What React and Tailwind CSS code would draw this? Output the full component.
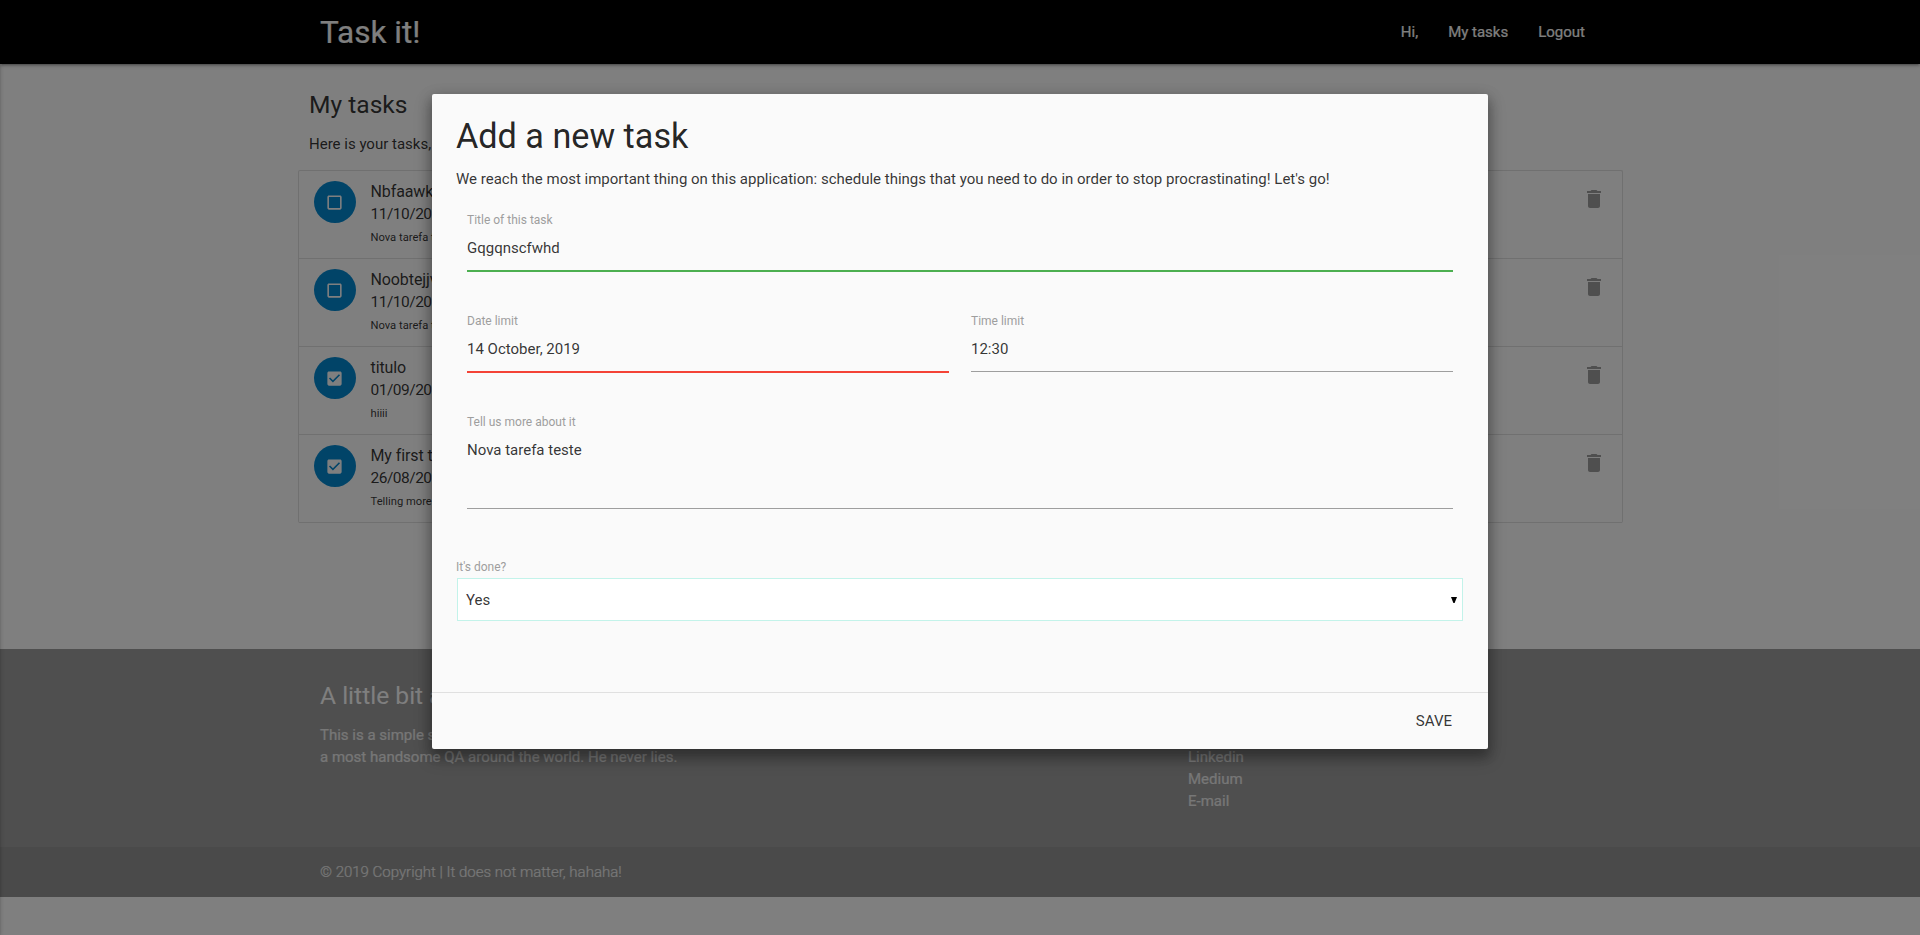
const tasks = [
  { title: "Nbfaawkdj", date: "11/10/2019", note: "Nova tarefa teste", done: false },
  { title: "Noobtejjvq", date: "11/10/2019", note: "Nova tarefa teste", done: false },
  { title: "titulo", date: "01/09/2019", note: "hiiii", done: true },
  { title: "My first task", date: "26/08/2019", note: "Telling more about it", done: true },
];

function CheckIcon({ done }) {
  return (
    <svg viewBox="0 0 24 24" className="mr-px size-[19px] fill-white">
      {done ? (
        <path d="M19 3H5c-1.11 0-2 .9-2 2v14c0 1.1.89 2 2 2h14c1.11 0 2-.9 2-2V5c0-1.1-.89-2-2-2zm-9 14l-5-5 1.41-1.41L10 14.17l7.59-7.59L19 8l-9 9z" />
      ) : (
        <path d="M19 5v14H5V5h14m0-2H5c-1.1 0-2 .9-2 2v14c0 1.1.9 2 2 2h14c1.1 0 2-.9 2-2V5c0-1.1-.9-2-2-2z" />
      )}
    </svg>
  );
}

function TaskRow({ task }) {
  return (
    <li className="flex h-[88px] items-start border-b border-[#e0e0e0] pt-[10px] pl-[15px] pr-4 leading-[22px]">
      <span className="flex size-[42px] shrink-0 items-center justify-center rounded-full bg-[#0288d1]">
        <CheckIcon done={task.done} />
      </span>
      <div className="ml-[14.5px] flex-1">
        <p className="text-[16px] tracking-[-0.1px]">{task.title}</p>
        <p className="text-[15.5px] tracking-[-0.5px]">{task.date}</p>
        <p className="mt-[2px] text-[11.2px]">{task.note}</p>
      </div>
      <svg viewBox="0 0 24 24" className="mt-[6px] size-6 fill-[#9e9e9e]">
        <path d="M6 19c0 1.1.9 2 2 2h8c1.1 0 2-.9 2-2V7H6v12zM19 4h-3.5l-1-1h-5l-1 1H5v2h14V4z" />
      </svg>
    </li>
  );
}

function Field({ label, value, line, className = "" }) {
  return (
    <div className={`flex flex-col px-[11px] ${className}`}>
      <span className="text-[12px] leading-[14px] text-[#9e9e9e]">{label}</span>
      <div className={`flex-1 pt-[10px] leading-[22px] text-black/80 ${line}`}>{value}</div>
    </div>
  );
}

export default function App() {
  return (
    <div className="relative h-[935px] w-full overflow-hidden bg-white font-['Roboto',sans-serif] text-[15px] leading-[22.5px] text-black/80">
      <nav className="relative h-16 bg-black text-white shadow-[0_2px_2px_0_rgba(0,0,0,0.14),0_3px_1px_-2px_rgba(0,0,0,0.12),0_1px_5px_0_rgba(0,0,0,0.2)]">
        <div className="mx-auto flex h-full w-[1280px] items-center justify-between">
          <span className="pt-px text-[31.5px] leading-[64px] [-webkit-text-stroke:0.2px]">Task it!</span>
          <div className="flex [-webkit-text-stroke:0.2px]">
            <a className="px-[15px]">Hi,</a>
            <a className="px-[15px]">My tasks</a>
            <a className="px-[15px]">Logout</a>
          </div>
        </div>
      </nav>

      <main className="mx-auto h-[585px] w-[1324px] pt-[27px]">
        <h5 className="pl-[11px] text-[24.6px] leading-[27px]">My tasks</h5>
        <p className="mt-[15px] pl-[11px]">Here is your tasks, organize them.</p>
        <ul className="mt-[14.5px] w-[1325px] rounded-[2px] border border-b-0 border-[#e0e0e0]">
          {tasks.map((t) => (
            <TaskRow key={t.title} task={t} />
          ))}
        </ul>
      </main>

      <footer className="bg-[#9e9e9e] text-[#eeeeee]">
        <div className="mx-auto flex h-[198px] w-[1280px] pt-[33px] leading-[22px]">
          <div className="w-[868px]">
            <h5 className="text-[24.6px] leading-[27px] text-white">A little bit about us</h5>
            <p className="mt-[15px] w-[400px] [-webkit-text-stroke:0.2px]">
              This is a simple system made by
              <br />a most handsome QA around the world. He never lies.
            </p>
          </div>
          <div>
            <h5 className="text-[24.6px] leading-[27px] text-white">Links</h5>
            <ul className="mt-[15px] [-webkit-text-stroke:0.2px]">
              <li>Github</li>
              <li>Linkedin</li>
              <li>Medium</li>
              <li>E-mail</li>
            </ul>
          </div>
        </div>
        <div className="bg-[#333333]/8">
          <div className="mx-auto flex h-[50px] w-[1280px] items-center font-light text-white/80 [-webkit-text-stroke:0.2px]">
            © 2019 Copyright | It does not matter, hahaha!
          </div>
        </div>
      </footer>

      <div className="absolute top-0 -left-2 h-full w-2 shadow-[0_2px_2px_0_rgba(0,0,0,0.14),0_1px_5px_0_rgba(0,0,0,0.2)]" />
      <div className="absolute inset-0 bg-black/50" />

      <section className="absolute top-[94px] left-[432px] flex h-[655px] w-[1056px] flex-col rounded-[2px] bg-[#fafafa] shadow-[0_8px_10px_1px_rgba(0,0,0,0.14),0_3px_14px_2px_rgba(0,0,0,0.12),0_8px_17px_2px_rgba(0,0,0,0.2)]">
        <div className="flex-1 px-6 pt-6">
          <h4 className="text-[34.2px] leading-[37px] text-black/87">Add a new task</h4>
          <p className="mt-[13px] leading-[23px]">
            We reach the most important thing on this application: schedule things that you need to do in order to stop
            procrastinating! Let's go!
          </p>
          <Field label="Title of this task" value="Gqgqnscfwhd" className="mt-[22px] h-[59px]" line="border-b-2 border-[#4caf50]" />
          <div className="mt-[42px] flex">
            <Field label="Date limit" value="14 October, 2019" className="h-[59px] w-1/2" line="border-b-2 border-[#f44336]" />
            <Field label="Time limit" value="12:30" className="h-[58px] w-1/2" line="border-b border-[#9e9e9e]" />
          </div>
          <Field label="Tell us more about it" value="Nova tarefa teste" className="mt-[42px] h-[94px]" line="border-b border-[#9e9e9e]" />
          <div className="mt-[51px] text-[12px] leading-[14px] text-[#9e9e9e]">It's done?</div>
          <div className="mt-1 ml-px flex h-[43px] w-[1006px] items-center justify-between border border-[#c3f3ea] bg-white pr-[5px] pl-2">
            <span className="pt-px">Yes</span>
            <svg viewBox="0 0 6 6" className="size-[6px] fill-black">
              <path d="M0 0h6L3.6 6H2.4z" />
            </svg>
          </div>
        </div>
        <div className="flex h-[57px] items-center justify-end border-t border-black/10 pr-9">
          <span>SAVE</span>
        </div>
      </section>
    </div>
  );
}
